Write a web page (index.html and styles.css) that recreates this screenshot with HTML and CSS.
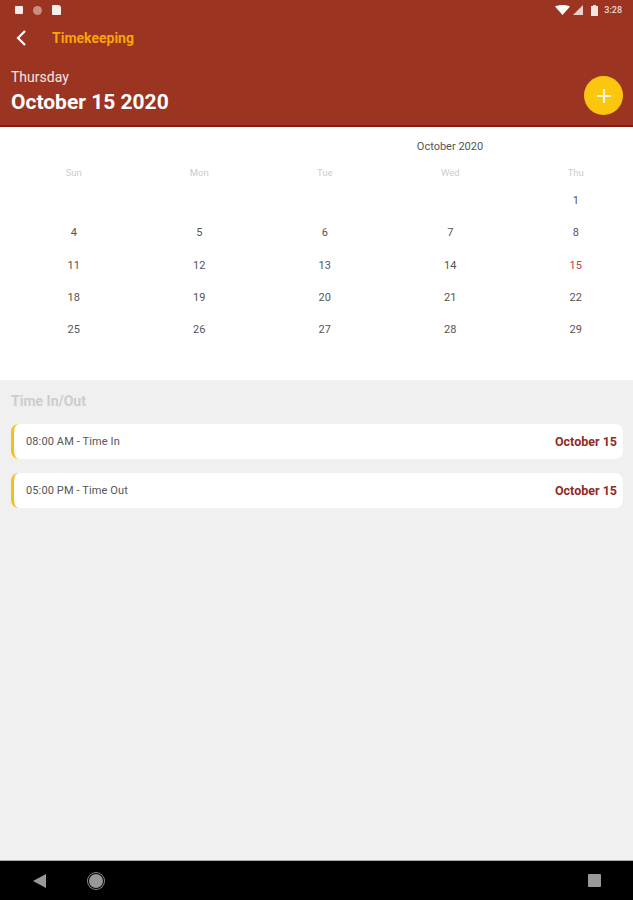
FILE: index.html
```html
<!DOCTYPE html>
<html lang="en">
<head>
    <meta charset="UTF-8">
    <meta name="viewport" content="width=device-width, initial-scale=1.0">
    <title>Timekeeping</title>
    <link rel="stylesheet" href="styles.css">
</head>
<body>
<div class="app">
    <div class="header">
        <div class="status">
            <div class="status-left">
                <span class="note-icon"></span>
                <span class="dot-icon"></span>
                <span class="file-icon"></span>
            </div>
            <div class="status-right">
                <svg width="15" height="10" viewBox="0 0 15 10"><path d="M0 1.5C4-.5 11-.5 15 1.5L7.500 10z" fill="#fff"/></svg>
                <svg width="10" height="10" viewBox="0 0 10 10"><path d="M10 0V10H0z" fill="#e8cfc9"/></svg>
                <svg class="battery" width="7" height="11" viewBox="0 0 7 11"><path d="M2 0H5V1H7V11H0V1H2z" fill="#f4e6e2"/></svg>
                <span class="clock">3:28</span>
            </div>
        </div>
        <div class="toolbar">
            <svg class="back" width="12" height="18" viewBox="0 0 12 18"><path d="M10 2L3 9l7 7" fill="none" stroke="#fff" stroke-width="2.200"/></svg>
            <span class="title">Timekeeping</span>
        </div>
        <div class="date-row">
            <div>
                <div class="day">Thursday</div>
                <div class="date">October 15 2020</div>
            </div>
            <button class="fab">
                <svg width="16" height="16" viewBox="0 0 16 16"><path d="M8 1V15M1 8H15" stroke="#fff6d0" stroke-width="2.200"/></svg>
            </button>
        </div>
    </div>

    <div class="calendar">
        <div class="month">October 2020</div>
        <div class="grid">
            <div class="wd">Sun</div><div class="wd">Mon</div><div class="wd">Tue</div><div class="wd">Wed</div><div class="wd">Thu</div>
            <div></div><div></div><div></div><div></div><div class="d">1</div>
            <div class="d">4</div><div class="d">5</div><div class="d">6</div><div class="d">7</div><div class="d">8</div>
            <div class="d">11</div><div class="d">12</div><div class="d">13</div><div class="d">14</div><div class="d today">15</div>
            <div class="d">18</div><div class="d">19</div><div class="d">20</div><div class="d">21</div><div class="d">22</div>
            <div class="d">25</div><div class="d">26</div><div class="d">27</div><div class="d">28</div><div class="d">29</div>
        </div>
    </div>

    <div class="log">
        <div class="log-title">Time In/Out</div>
        <div class="card">
            <span class="card-text">08:00 AM - Time In</span>
            <span class="card-date">October 15</span>
        </div>
        <div class="card">
            <span class="card-text">05:00 PM - Time Out</span>
            <span class="card-date">October 15</span>
        </div>
    </div>

    <div class="nav">
        <svg width="14" height="14" viewBox="0 0 14 14"><path d="M13 0V14L0 7z" fill="#999"/></svg>
        <span class="home"></span>
        <span class="recent"></span>
    </div>
</div>
</body>
</html>
```

FILE: styles.css
```css
*{
    margin:0;
    padding:0;
    box-sizing:border-box;
}
body{
    background-color:#f0f0f0;
    font-family:Roboto,"Liberation Sans",sans-serif;
}
.app{
    width:633px;
    height:900px;
    display:flex;
    flex-direction:column;
    overflow:hidden;
}

/* header */
.header{
    height:127px;
    background-color:#9c3422;
    border-bottom:2px solid #8a1712;
    color:#fff;
}
.status{
    height:17px;
    padding:3px 11px 0 15px;
    display:flex;
    justify-content:space-between;
    align-items:center;
}
.status-left{
    display:flex;
    align-items:center;
    gap:10px;
}
.note-icon{
    width:8px;
    height:8px;
    background-color:#f6ece9;
    border-radius:1px;
}
.dot-icon{
    width:9px;
    height:9px;
    background-color:#c98d83;
    border-radius:50%;
}
.file-icon{
    width:9px;
    height:10px;
    background-color:#f8efed;
    border-radius:1px 3px 1px 1px;
}
.status-right{
    display:flex;
    align-items:center;
    gap:3px;
}
.battery{
    margin-left:5px;
}
.clock{
    margin-left:3px;
    font-size:9px;
    font-weight:500;
    color:#f0dcd8;
}
.toolbar{
    height:41px;
    padding-left:15px;
    display:flex;
    align-items:center;
}
.title{
    margin-left:25px;
    font-size:14px;
    font-weight:700;
    color:#f9a30a;
}
.date-row{
    padding:0 10px 0 11px;
    display:flex;
    justify-content:space-between;
    align-items:flex-start;
}
.day{
    margin-top:10px;
    font-size:14px;
    line-height:18px;
    color:#f6e6e2;
}
.date{
    margin-top:4px;
    font-size:21px;
    line-height:25px;
    font-weight:700;
}
.fab{
    width:39px;
    height:39px;
    margin-top:18px;
    border:none;
    border-radius:50%;
    background-color:#fcc60f;
    display:flex;
    align-items:center;
    justify-content:center;
}

/* calendar */
.calendar{
    height:253px;
    background-color:#fff;
    padding:13px 0 0 11px;
    overflow:hidden;
}
.month{
    width:878px;
    font-size:11px;
    line-height:14px;
    text-align:center;
    color:#555;
}
.grid{
    margin-top:12px;
    display:grid;
    grid-template-columns:repeat(5,125.500px);
    grid-template-rows:23px;
    grid-auto-rows:32.250px;
}
.wd{
    height:14px;
    font-size:9.500px;
    line-height:14px;
    text-align:center;
    color:#c9cccf;
}
.d{
    font-size:11px;
    line-height:16px;
    text-align:center;
    color:#555;
    padding-top:4px;
}
.today{
    color:#b5404a;
}

/* time in/out */
.log{
    flex:1;
    padding:13px 10px 0 11px;
}
.log-title{
    font-size:14px;
    line-height:16px;
    font-weight:700;
    color:#cdcdcd;
    margin-bottom:15px;
}
.card{
    height:35px;
    margin-bottom:14px;
    padding:0 6px 0 12px;
    background-color:#fff;
    border-left:3px solid #f9bd17;
    border-radius:8px;
    display:flex;
    justify-content:space-between;
    align-items:center;
}
.card-text{
    font-size:11px;
    letter-spacing:.12px;
    color:#555;
}
.card-date{
    font-size:12.500px;
    font-weight:700;
    color:#94291f;
}

/* nav bar */
.nav{
    height:40px;
    background-color:#000;
    border-top:1px solid #aaa;
    padding:0 32px 0 33px;
    display:flex;
    align-items:center;
}
.home{
    width:14px;
    height:14px;
    margin-left:42px;
    border-radius:50%;
    background-color:#999;
    box-shadow:0 0 0 1px #000,0 0 0 2px #888;
}
.recent{
    width:13px;
    height:13px;
    margin-left:auto;
    background-color:#999;
    border-radius:1px;
}
```
